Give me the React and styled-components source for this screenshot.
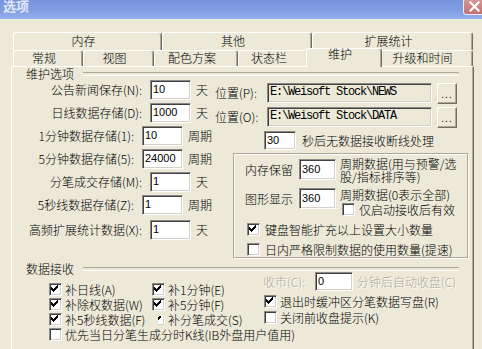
import styled, { createGlobalStyle } from "styled-components";

const GlobalStyle = createGlobalStyle`
  * { box-sizing: border-box; }
  html, body { margin: 0; padding: 0; background: #ece9d8; }
  body {
    font-family: "Noto Sans CJK SC", "Noto Sans", sans-serif;
    font-size: 12px;
    font-weight: 300;
    color: #000;
  }
`;

const Window = styled.div`
  width: 482px;
  height: 349px;
  overflow: hidden;
  background: #ece9d8;
  display: flex;
  flex-direction: column;
`;

const TitleBar = styled.div`
  flex: none;
  height: 19px;
  display: flex;
  justify-content: space-between;
  align-items: flex-start;
  background: linear-gradient(180deg, #7894dc 0%, #819ee2 55%, #95b0ec 100%);
`;

const TitleText = styled.div`
  padding-left: 3px;
  margin-top: -1px;
  font-size: 13px;
  font-weight: bold;
  line-height: 14px;
  color: #e2e9f8;
`;

const CloseButton = styled.div`
  width: 22px;
  height: 17px;
  margin-top: -2px;
  margin-right: -3px;
  border: 1px solid #eef0f8;
  border-radius: 3px;
  background: linear-gradient(180deg, #d69a98, #c27272);
  display: flex;
  align-items: center;
  justify-content: center;
`;

const Content = styled.div`
  padding: 13px 0 0 11px;
`;

const TabStrip = styled.div`
  margin-left: 2px;
  width: 460px;
`;

const TabRow = styled.div`
  display: flex;
  align-items: flex-start;
  height: ${(p) => p.$h}px;
`;

const Tab = styled.div`
  position: relative;
  flex: none;
  width: ${(p) => p.$w + (p.$sel ? 4 : 0)}px;
  height: ${(p) => p.$h}px;
  margin: ${(p) => (p.$sel ? "-2px -2px 0" : "0")};
  z-index: ${(p) => (p.$sel ? 3 : 1)};
  padding: ${(p) => p.$pt}px 8px 0 0;
  border-top: 1px solid #fff;
  border-left: 1px solid #fff;
  border-right: 1px solid #716f64;
  box-shadow: inset -1px 0 #aca899;
  border-radius: 3px 3px 0 0;
  background: #ece9d8;
  text-align: center;
  line-height: ${(p) => (p.$sel ? 10 : 14)}px;
  white-space: nowrap;
`;

const Panel = styled.div`
  position: relative;
  z-index: 2;
  width: 463px;
  height: 290px;
  border-top: 1px solid #fff;
  border-left: 1px solid #fff;
  border-right: 1px solid #716f64;
  box-shadow: inset -1px 0 #aca899;
  display: flex;
  flex-direction: column;
`;

const GroupHead = styled.div`
  flex: none;
  height: 13px;
  margin-top: ${(p) => p.$mt || 0}px;
  padding: 0 14px;
  display: flex;
  align-items: center;
  gap: 9px;
  line-height: 13px;
  white-space: nowrap;

  &::after {
    content: "";
    flex: 1;
    height: 2px;
    border-top: 1px solid #aca899;
    border-bottom: 1px solid #fff;
  }
`;

const MaintBody = styled.div`
  display: flex;
`;

const LeftCol = styled.div`
  flex: none;
  width: 200px;
`;

const FieldRow = styled.div`
  display: flex;
  align-items: flex-start;
  height: 23px;
  margin-top: ${(p) => p.$mt || 0}px;
`;

const FieldLabel = styled.div`
  width: 130px;
  margin-right: 8px;
  text-align: right;
  line-height: 20px;
  white-space: nowrap;
`;

const Unit = styled.div`
  margin-left: 5px;
  line-height: 20px;
  white-space: nowrap;
`;

const TextBox = styled.div`
  flex: none;
  width: ${(p) => p.$w}px;
  height: ${(p) => p.$h || 20}px;
  margin-top: ${(p) => p.$mt || 0}px;
  padding: 0 2px;
  background: ${(p) => (p.$readonly ? "#ece9d8" : "#fff")};
  border: 1px solid;
  border-color: #8a8a8a #fff #fff #8a8a8a;
  box-shadow: inset 1px 1px #404040, inset -1px -1px #d4d0c8;
  font-family: ${(p) => (p.$mono ? '"Liberation Mono", monospace' : '"Liberation Sans", Arial, sans-serif')};
  font-size: ${(p) => (p.$mono ? 12 : 11)}px;
  font-weight: normal;
  letter-spacing: ${(p) => (p.$mono ? "-1.2px" : "0")};
  line-height: ${(p) => (p.$h || 20) - 3}px;
  white-space: nowrap;
  overflow: hidden;
`;

const RightCol = styled.div`
  flex: 1;
  display: flex;
  flex-direction: column;
  padding-top: 3px;
`;

const PathRow = styled.div`
  display: flex;
  align-items: flex-start;
  height: 24px;
`;

const PathLabel = styled.div`
  width: 55px;
  padding-left: 3px;
  line-height: 20px;
  white-space: nowrap;
`;

const BrowseButton = styled.div`
  flex: none;
  width: 20px;
  height: 21px;
  margin-left: 5px;
  background: #ece9d8;
  border: 1px solid;
  border-color: #fff #716f64 #716f64 #fff;
  box-shadow: inset -1px -1px #aca899;
  display: flex;
  align-items: flex-end;
  justify-content: center;
  padding-bottom: 4px;
  font: 10px/8px "Liberation Sans", sans-serif;
  letter-spacing: 1px;
`;

const TimeoutRow = styled.div`
  display: flex;
  align-items: center;
  gap: 6px;
  height: 19px;
  margin-left: 52px;
  white-space: nowrap;
`;

const OptionBox = styled.div`
  width: 235px;
  height: 105px;
  margin: 3px 0 0 21px;
  border: 1px solid #aca899;
  box-shadow: inset 1px 1px #fff, 1px 1px #fff;
  display: flex;
  flex-direction: column;
`;

const OptRow = styled.div`
  display: flex;
  align-items: flex-start;
  height: ${(p) => p.$h}px;
  margin-top: ${(p) => p.$mt}px;
  padding-left: 11px;
`;

const OptLabel = styled.div`
  width: 48px;
  margin-right: 6px;
  margin-top: ${(p) => p.$mt}px;
  line-height: 21px;
  white-space: nowrap;
`;

const NoteStack = styled.div`
  display: flex;
  flex-direction: column;
  margin-left: 4px;
  padding-top: ${(p) => p.$pt || 0}px;
  gap: ${(p) => p.$gap || 0}px;
`;

const NoteLine = styled.div`
  height: 13px;
  line-height: 13px;
  white-space: nowrap;
`;

const CheckRow = styled.div`
  display: flex;
  align-items: center;
  gap: ${(p) => p.$gap || 3}px;
  height: ${(p) => p.$h || 15}px;
  margin-top: ${(p) => p.$mt || 0}px;
  margin-left: ${(p) => p.$ml || 0}px;
`;

const CheckLabel = styled.div`
  height: 13px;
  line-height: 13px;
  white-space: nowrap;
`;

const CheckBox = styled.span`
  position: relative;
  flex: none;
  width: 13px;
  height: 13px;
  background: #fff;
  border: 1px solid;
  border-color: #8a8a8a #fff #fff #8a8a8a;
  box-shadow: inset 1px 1px #404040, inset -1px -1px #d4d0c8;
  ${(p) => p.$clip && "clip-path: inset(3px 0 1px 6px);"}

  svg {
    display: block;
  }
`;

const RecvBody = styled.div`
  margin-top: -3px;
  display: flex;
  flex-direction: column;
`;

const RecvTop = styled.div`
  display: flex;
  align-items: flex-start;
`;

const CheckGrid = styled.div`
  flex: none;
  width: 214px;
  margin: 10px 0 0 37px;
  display: grid;
  grid-template-columns: 103px 111px;
  grid-auto-rows: 15px;
`;

const RightBlock = styled.div`
  display: flex;
  flex-direction: column;
`;

const CloseRow = styled.div`
  display: flex;
  align-items: flex-start;
  height: 21px;
  white-space: nowrap;
`;

const Disabled = styled.div`
  width: ${(p) => (p.$w ? `${p.$w}px` : "auto")};
  margin-left: ${(p) => p.$ml || 0}px;
  line-height: 19px;
  color: #aca899;
  text-shadow: 1px 1px 0 #fff;
`;

const checkPixels = [
  [6, 0, 1],
  [5, 1, 2],
  [0, 2, 1],
  [4, 2, 3],
  [0, 3, 2],
  [3, 3, 3],
  [0, 4, 5],
  [1, 5, 3],
  [2, 6, 1],
];

const Check = ({ checked, clip }) => (
  <CheckBox $clip={clip}>
    {checked && (
      <svg width="11" height="11" viewBox="0 0 11 11" shapeRendering="crispEdges">
        {checkPixels.map(([x, y, w]) => (
          <rect key={`${x}-${y}`} x={x + 1} y={y + 1} width={w} height="1" fill="#000" />
        ))}
      </svg>
    )}
  </CheckBox>
);

const CloseIcon = () => (
  <svg width="11" height="11" viewBox="0 0 11 11">
    <path d="M1.5 1.5 L9.5 9.5 M9.5 1.5 L1.5 9.5" stroke="#fff" strokeWidth="2.2" strokeLinecap="square" />
  </svg>
);

const backTabs = [
  { label: "内存", w: 149 },
  { label: "其他", w: 150 },
  { label: "扩展统计", w: 161 },
];

const frontTabs = [
  { label: "常规", w: 70 },
  { label: "视图", w: 71 },
  { label: "配色方案", w: 84 },
  { label: "状态栏", w: 70 },
  { label: "维护", w: 72, sel: true },
  { label: "升级和时间", w: 93 },
];

const storage = [
  { label: "公告新闻保存(N):", value: "10", unit: "天" },
  { label: "日线数据存储(D):", value: "1000", unit: "天" },
  { label: "1分钟数据存储(1):", value: "10", unit: "周期" },
  { label: "5分钟数据存储(5):", value: "24000", unit: "周期" },
  { label: "分笔成交存储(M):", value: "1", unit: "天" },
  { label: "5秒线数据存储(Z):", value: "1", unit: "周期" },
  { label: "高频扩展统计数据(X):", value: "1", unit: "天", mt: 2 },
];

const paths = [
  { label: "位置(P):", value: "E:\\Weisoft Stock\\NEWS" },
  { label: "位置(O):", value: "E:\\Weisoft Stock\\DATA" },
];

const fillChecks = [
  { label: "补日线(A)", checked: true },
  { label: "补1分钟(E)", checked: true },
  { label: "补除权数据(W)", checked: true },
  { label: "补5分钟(F)", checked: true },
  { label: "补5秒线数据(F)", checked: true },
  { label: "补分笔成交(S)", checked: true, clip: true },
];

export default function App() {
  return (
    <>
      <GlobalStyle />
      <Window>
        <TitleBar>
          <TitleText>选项</TitleText>
          <CloseButton>
            <CloseIcon />
          </CloseButton>
        </TitleBar>

        <Content>
          <TabStrip>
            <TabRow $h={18}>
              {backTabs.map((t) => (
                <Tab key={t.label} $w={t.w} $h={18} $pt={1}>
                  {t.label}
                </Tab>
              ))}
            </TabRow>
            <TabRow $h={16}>
              {frontTabs.map((t) => (
                <Tab key={t.label} $w={t.w} $h={t.sel ? 19 : 16} $pt={0} $sel={t.sel}>
                  {t.label}
                </Tab>
              ))}
            </TabRow>
          </TabStrip>

          <Panel>
            <GroupHead>维护选项</GroupHead>
            <MaintBody>
              <LeftCol>
                {storage.map((r) => (
                  <FieldRow key={r.label} $mt={r.mt}>
                    <FieldLabel>{r.label}</FieldLabel>
                    <TextBox $w={41}>{r.value}</TextBox>
                    <Unit>{r.unit}</Unit>
                  </FieldRow>
                ))}
              </LeftCol>

              <RightCol>
                {paths.map((p) => (
                  <PathRow key={p.label}>
                    <PathLabel>{p.label}</PathLabel>
                    <TextBox $w={165} $readonly $mono>
                      {p.value}
                    </TextBox>
                    <BrowseButton>...</BrowseButton>
                  </PathRow>
                ))}
                <TimeoutRow>
                  <TextBox $w={32} $h={19}>30</TextBox>
                  <span>秒后无数据接收断线处理</span>
                </TimeoutRow>

                <OptionBox>
                  <OptRow $h={28} $mt={3}>
                    <OptLabel $mt={2}>内存保留</OptLabel>
                    <TextBox $w={37} $h={21} $mt={2}>360</TextBox>
                    <NoteStack>
                      <NoteLine>周期数据(用与预警/选</NoteLine>
                      <NoteLine>股/指标排序等)</NoteLine>
                    </NoteStack>
                  </OptRow>
                  <OptRow $h={30} $mt={2}>
                    <OptLabel $mt={1}>图形显示</OptLabel>
                    <TextBox $w={37} $h={21} $mt={1}>360</TextBox>
                    <NoteStack $pt={1} $gap={1}>
                      <NoteLine>周期数据(0表示全部)</NoteLine>
                      <CheckRow $ml={2} $gap={4} $h={14}>
                        <Check />
                        <CheckLabel>仅启动接收后有效</CheckLabel>
                      </CheckRow>
                    </NoteStack>
                  </OptRow>
                  <CheckRow $ml={13} $gap={5} $mt={5}>
                    <Check checked />
                    <CheckLabel>键盘智能扩充以上设置大小数量</CheckLabel>
                  </CheckRow>
                  <CheckRow $ml={13} $gap={5} $mt={5}>
                    <Check />
                    <CheckLabel>日内严格限制数据的使用数量(提速)</CheckLabel>
                  </CheckRow>
                </OptionBox>
              </RightCol>
            </MaintBody>

            <GroupHead $mt={4}>数据接收</GroupHead>
            <RecvBody>
              <RecvTop>
                <CheckGrid>
                  {fillChecks.map((c) => (
                    <CheckRow key={c.label}>
                      <Check checked={c.checked} clip={c.clip} />
                      <CheckLabel>{c.label}</CheckLabel>
                    </CheckRow>
                  ))}
                </CheckGrid>
                <RightBlock>
                  <CloseRow>
                    <Disabled $w={52}>收市(C):</Disabled>
                    <TextBox $w={38} $h={19}>0</TextBox>
                    <Disabled $ml={4}>分钟后自动收盘(C)</Disabled>
                  </CloseRow>
                  <CheckRow $h={16} $ml={1}>
                    <Check checked />
                    <CheckLabel>退出时缓冲区分笔数据写盘(R)</CheckLabel>
                  </CheckRow>
                  <CheckRow $h={16} $ml={1}>
                    <Check />
                    <CheckLabel>关闭前收盘提示(K)</CheckLabel>
                  </CheckRow>
                </RightBlock>
              </RecvTop>
              <CheckRow $ml={37}>
                <Check />
                <CheckLabel>优先当日分笔生成分时K线(IB外盘用户值用)</CheckLabel>
              </CheckRow>
            </RecvBody>
          </Panel>
        </Content>
      </Window>
    </>
  );
}
